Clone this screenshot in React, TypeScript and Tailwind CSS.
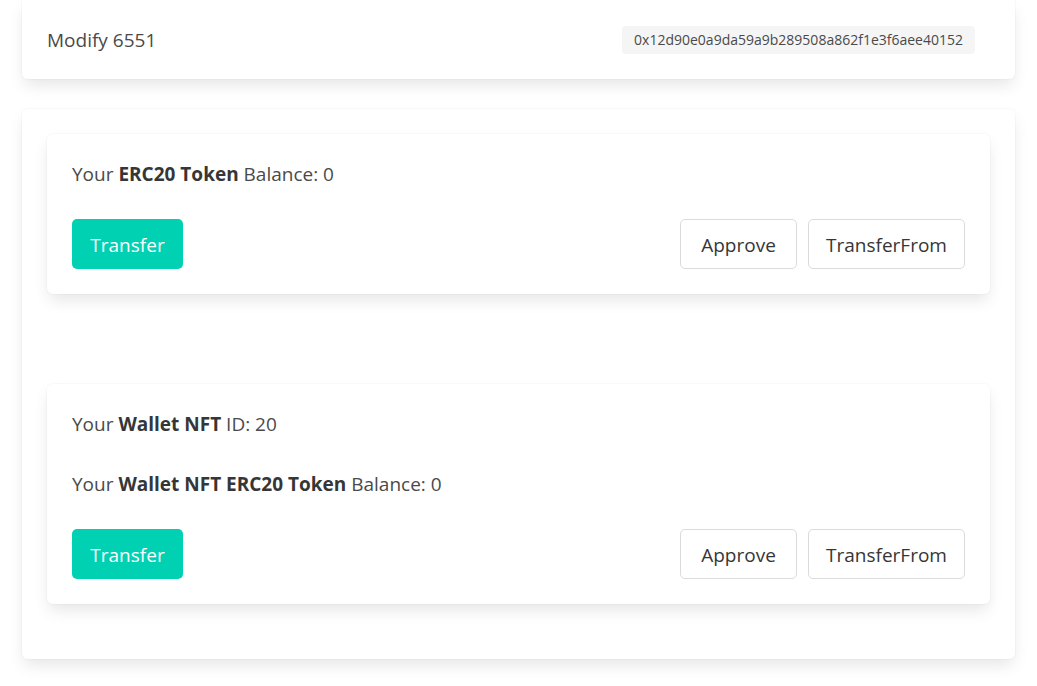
const font = { fontFamily: '"Open Sans", "Noto Sans", sans-serif' };

const Outline = ({ label, w }: { label: string; w: string }) => (
  <button className={`h-[50px] ${w} rounded-[5px] border border-[#dbdbdb] bg-white pt-[2px] text-[19px] text-[#363636]`}>
    {label}
  </button>
);

const Actions = () => (
  <div className="flex items-center justify-between">
    <button className="h-[50px] w-[111px] rounded-[5px] bg-[#00d1b2] pt-[2px] text-[19px] text-white">Transfer</button>
    <div className="flex gap-[11px]">
      <Outline label="Approve" w="w-[117px]" />
      <Outline label="TransferFrom" w="w-[157px]" />
    </div>
  </div>
);

const Card = ({ children }: { children: React.ReactNode }) => (
  <div className="rounded-[6px] bg-white p-[25px] shadow-[0_8px_16px_-2px_rgba(10,10,10,0.1),0_0_0_1px_rgba(10,10,10,0.02)]">
    {children}
  </div>
);

export default function App() {
  return (
    <div className="min-h-[686px] bg-white px-[22px] text-[19px] text-[#4a4a4a]" style={font}>
      <div className="flex h-[79px] items-center justify-between rounded-b-[6px] bg-white pl-[25px] pr-[40px] shadow-[0_8px_16px_-2px_rgba(10,10,10,0.1),0_0_0_1px_rgba(10,10,10,0.02)]">
        <span className="pt-[1px]">Modify 6551</span>
        <span className="flex h-[28px] items-center rounded-[4px] bg-[#f5f5f5] px-3 text-[14px]">
          0x12d90e0a9da59a9b289508a862f1e3f6aee40152
        </span>
      </div>

      <div className="mt-[30px] rounded-[6px] bg-white px-[25px] pt-[25px] pb-[55px] shadow-[0_8px_16px_-2px_rgba(10,10,10,0.1),0_0_0_1px_rgba(10,10,10,0.02)]">
        <Card>
          <p className="mb-[30px] leading-[30px]">
            Your <b className="font-bold text-[#363636]">ERC20 Token</b> Balance: 0
          </p>
          <Actions />
        </Card>

        <div className="mt-[90px]">
          <Card>
            <p className="mb-[30px] leading-[30px]">
              Your <b className="font-bold text-[#363636]">Wallet NFT</b> ID: 20
            </p>
            <p className="mb-[30px] leading-[30px]">
              Your <b className="font-bold text-[#363636]">Wallet NFT ERC20 Token</b> Balance: 0
            </p>
            <Actions />
          </Card>
        </div>
      </div>
    </div>
  );
}
